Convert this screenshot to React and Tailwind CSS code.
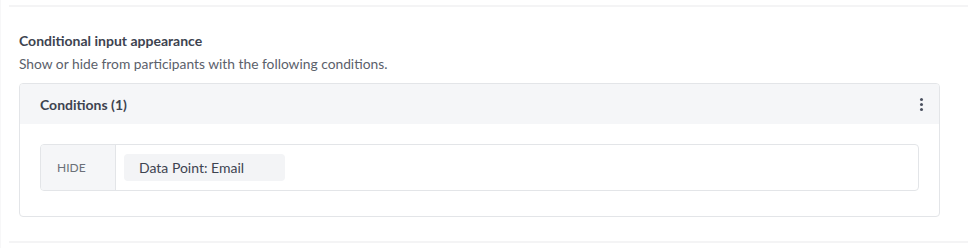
export default function App() {
  return (
    <div className="w-[968px] h-[248px] bg-white pt-[5px] font-['Lato',sans-serif] border-l border-[#f7f7f8]">
      <div className="ml-[8px] border-t-2 border-b-2 border-[#f4f4f5] h-[238px] pl-[10px] pr-[28px] pt-[25px]">
        <h2 className="text-[14px] font-bold text-[#3d4350] leading-[18px]">Conditional input appearance</h2>
        <p className="text-[13.8px] text-[#5b616b] leading-[18px] mt-[5px]">
          Show or hide from participants with the following conditions.
        </p>

        {/* Conditions card */}
        <div className="mt-[10px] border border-[#e3e5e8] rounded-[4px] overflow-hidden">
          <div className="flex items-center justify-between h-[40px] bg-[#f5f6f8] pl-[20px] pr-[15px]">
            <span className="text-[14px] font-bold text-[#3d4350]">Conditions (1)</span>
            <button className="flex flex-col items-center gap-[2px] px-[1px]" aria-label="More">
              <span className="w-[3px] h-[3px] rounded-full bg-[#4b5160]" />
              <span className="w-[3px] h-[3px] rounded-full bg-[#4b5160]" />
              <span className="w-[3px] h-[3px] rounded-full bg-[#4b5160]" />
            </button>
          </div>
          <div className="px-[20px] pt-[20px] pb-[25px]">
            <div className="flex h-[47px] border border-[#e3e5e8] rounded-[4px] overflow-hidden">
              <div className="w-[75px] bg-[#f5f6f8] border-r border-[#e3e5e8] flex items-center pl-[16px] text-[12px] text-[#6b7079]">
                HIDE
              </div>
              <div className="flex items-center pl-[8px]">
                <span className="bg-[#f3f4f6] rounded-[4px] h-[27px] w-[161px] flex items-center pl-[15px] text-[14px] text-[#3d4350]">
                  Data Point: Email
                </span>
              </div>
            </div>
          </div>
        </div>
      </div>
    </div>
  )
}
